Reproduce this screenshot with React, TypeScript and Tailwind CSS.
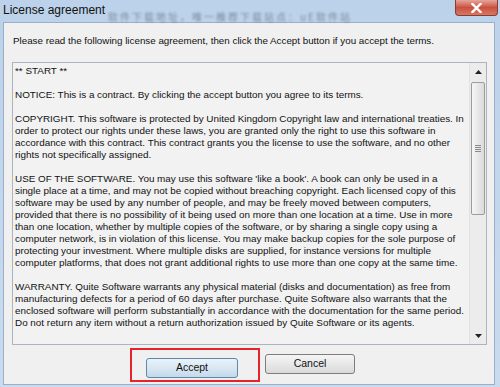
import React from 'react';

const licenseLines = [
  '** START **',
  '',
  'NOTICE: This is a contract. By clicking the accept button you agree to its terms.',
  '',
  'COPYRIGHT. This software is protected by United Kingdom Copyright law and international treaties. In',
  'order to protect our rights under these laws, you are granted only the right to use this software in',
  'accordance with this contract. This contract grants you the license to use the software, and no other',
  'rights not specifically assigned.',
  '',
  "USE OF THE SOFTWARE. You may use this software 'like a book'. A book can only be used in a",
  'single place at a time, and may not be copied without breaching copyright. Each licensed copy of this',
  'software may be used by any number of people, and may be freely moved between computers,',
  'provided that there is no possibility of it being used on more than one location at a time. Use in more',
  'than one location, whether by multiple copies of the software, or by sharing a single copy using a',
  'computer network, is in violation of this license. You may make backup copies for the sole purpose of',
  'protecting your investment. Where multiple disks are supplied, for instance versions for multiple',
  'computer platforms, that does not grant additional rights to use more than one copy at the same time.',
  '',
  'WARRANTY. Quite Software warrants any physical material (disks and documentation) as free from',
  'manufacturing defects for a period of 60 days after purchase. Quite Software also warrants that the',
  'enclosed software will perform substantially in accordance with the documentation for the same period.',
  'Do not return any item without a return authorization issued by Quite Software or its agents.',
];

const Arrow = ({ down }: { down?: boolean }) => (
  <svg width="7" height="4" viewBox="0 0 7 4">
    <path d={down ? 'M0 0h7L3.5 4z' : 'M0 4h7L3.5 0z'} fill="#222" />
  </svg>
);

const ScrollBar = () => (
  <div className="w-[17px] h-full flex flex-col bg-[#ececec] border-l border-[#e2e2e2]">
    <div className="h-[17px] flex items-center justify-center">
      <Arrow />
    </div>
    <div className="flex-1 px-[1px]">
      <div className="mt-[2px] h-[133px] rounded-[2px] border border-[#9c9c9c] bg-linear-to-r from-[#f6f6f6] to-[#dadada] flex flex-col items-center justify-center gap-[1px]">
        <div className="w-[6px] h-[1px] bg-[#8a8a8a]" />
        <div className="w-[6px] h-[1px] bg-[#8a8a8a]" />
        <div className="w-[6px] h-[1px] bg-[#8a8a8a]" />
        <div className="w-[6px] h-[1px] bg-[#8a8a8a]" />
      </div>
    </div>
    <div className="h-[17px] flex items-center justify-center">
      <Arrow down />
    </div>
  </div>
);

export default function App() {
  return (
    <div className="w-[500px] h-[387px] overflow-hidden flex flex-col bg-linear-to-b from-[#bcd2ea] to-[#c9dbee] font-['Liberation_Sans',Arial,sans-serif]">
      {/* title bar */}
      <div className="relative h-[22px] flex justify-between items-start shrink-0">
        <div className="pl-[3px] pt-[3px] text-[12px] leading-[14px] text-[#111]">License agreement</div>
        {/* text of the window behind, seen through the glass */}
        <div className="absolute left-[108px] top-[9px] text-[10px] tracking-[2px] text-[#2a3340] opacity-45 blur-[1.2px] whitespace-nowrap font-['Noto_Sans_CJK_SC',sans-serif]">
          软件下载地址，唯一推荐下载站点：uE软件站
        </div>
        <div className="mr-[2px] w-[43px] h-[16px] rounded-b-[4px] border border-t-0 border-[#8b3b32] bg-linear-to-b from-[#e6a59b] via-[#c9503f] to-[#d47a66] flex items-center justify-center">
          <svg width="11" height="10" viewBox="0 0 11 10">
            <path d="M1.5 1l8 8M9.5 1l-8 8" stroke="#fff" strokeWidth="2.4" strokeLinecap="square" />
          </svg>
        </div>
      </div>

      {/* dialog body */}
      <div className="ml-[3px] mr-[5px] h-[363px] border border-[#9ab0c9] bg-[#f0f0f0] flex flex-col">
        <div className="pl-[9px] pt-[12px] text-[9.8px] leading-[12px] text-[#111] whitespace-nowrap">
          Please read the following license agreement, then click the Accept button if you accept the terms.
        </div>

        <div className="ml-[8px] mt-[15px] w-[475px] h-[283px] border border-[#abb4bf] bg-[#f2f2f2] flex">
          <div className="flex-1 pl-[2px] pt-[2px] text-[9.9px] leading-[12px] text-[#111] overflow-hidden">
            {licenseLines.map((line, i) => (
              <div key={i} className="h-[12px] whitespace-pre">
                {line}
              </div>
            ))}
          </div>
          <ScrollBar />
        </div>

        <div className="pl-[142px] mt-[9px] flex gap-[27px]">
          <div className="relative">
            <button className="w-[92px] h-[20px] rounded-[3px] border border-[#5a88ae] bg-linear-to-b from-[#eaf2f8] via-[#d9e7f2] to-[#c4d9ea] text-[10.5px] text-[#111]">
              Accept
            </button>
            <div className="absolute -left-[16px] -top-[6px] w-[130px] h-[34px] border-2 border-[#e3242b]" />
          </div>
          <button className="w-[90px] h-[20px] rounded-[3px] border border-[#7d7d7d] bg-linear-to-b from-[#f5f5f5] via-[#e8e8e8] to-[#d9d9d9] text-[10.5px] text-[#111]">
            Cancel
          </button>
        </div>
      </div>
    </div>
  );
}
